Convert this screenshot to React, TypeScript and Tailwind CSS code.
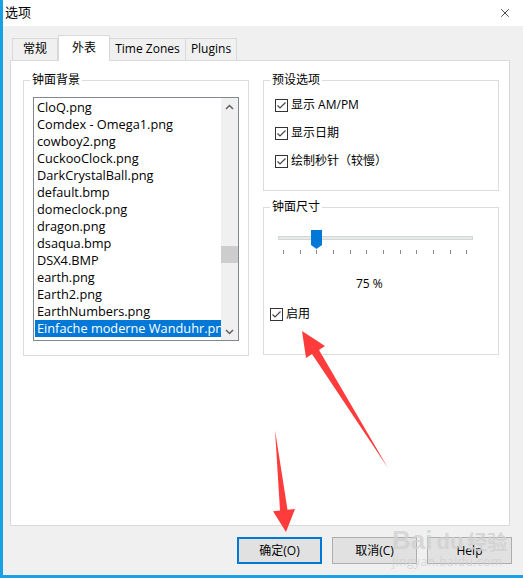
import { X } from 'lucide-react'

const files = [
  'CloQ.png',
  'Comdex - Omega1.png',
  'cowboy2.png',
  'CuckooClock.png',
  'DarkCrystalBall.png',
  'default.bmp',
  'domeclock.png',
  'dragon.png',
  'dsaqua.bmp',
  'DSX4.BMP',
  'earth.png',
  'Earth2.png',
  'EarthNumbers.png',
  'Einfache moderne Wanduhr.png',
]

const selected = 'Einfache moderne Wanduhr.png'

function Check() {
  return (
    <span className="w-[13px] h-[13px] border border-[#333333] bg-white flex items-center justify-center shrink-0">
      <svg width="11" height="11" viewBox="0 0 11 11">
        <path d="M1.5 5.5 L4 8 L9.5 2.5" fill="none" stroke="#444444" strokeWidth="1.2" />
      </svg>
    </span>
  )
}

function Group({ label, className, children }: { label: string; className: string; children: React.ReactNode }) {
  return (
    <div className={`relative border border-[#dcdcdc] ${className}`}>
      <span className="absolute -top-[9px] left-[6px] px-[2px] bg-white leading-[16px]">{label}</span>
      {children}
    </div>
  )
}

function Chevron({ up }: { up?: boolean }) {
  return (
    <svg width="9" height="6" viewBox="0 0 9 6">
      <path d={up ? 'M1 5 L4.5 1.5 L8 5' : 'M1 1 L4.5 4.5 L8 1'} fill="none" stroke="#606060" strokeWidth="1.5" />
    </svg>
  )
}

function Slider() {
  const ticks = Array.from({ length: 12 }, (_, i) => Math.round(5 + i * 16.67) + 0.5)
  return (
    <svg width="195" height="24" viewBox="0 0 195 24">
      <rect x="0.5" y="6.5" width="194" height="3" fill="#e7eaea" stroke="#d6d6d6" />
      {ticks.map((x) => (
        <line key={x} x1={x} y1="20" x2={x} y2="24" stroke="#8a8a8a" />
      ))}
      <polygon points="33,0 44,0 44,15 38.5,19 33,15" fill="#0078d7" />
    </svg>
  )
}

export default function App() {
  return (
    <div className="relative w-[523px] h-[578px] overflow-hidden font-['Open_Sans','Noto_Sans_CJK_SC',sans-serif] text-[12px] text-black">
      <div className="w-full h-full bg-[#f0f0f0] border-l-[3px] border-b-[3px] border-[#1aa0e4] flex flex-col">
        <div className="h-[26px] bg-white flex items-center justify-between pl-[2px] pr-[11px] shrink-0">
          <span className="text-[13px]">选项</span>
          <X className="w-[14px] h-[14px]" strokeWidth={1.2} />
        </div>

        <div className="flex items-end h-[26px] mt-[9px] ml-[9px]">
          <div className="w-[46px] h-[23px] border border-b-0 border-[#d9d9d9] flex items-center justify-center pb-[2px]">常规</div>
          <div className="relative z-10 w-[52px] h-[26px] bg-white border border-b-0 border-[#d9d9d9] flex items-center justify-center pb-[2px]">外表</div>
          <div className="w-[76px] h-[23px] border border-b-0 border-l-0 border-[#d9d9d9] flex items-center justify-center pb-[2px]">Time Zones</div>
          <div className="w-[51px] h-[23px] border border-b-0 border-l-0 border-[#d9d9d9] flex items-center justify-center pb-[2px]">Plugins</div>
        </div>

        <div className="-mt-px ml-[7px] w-[500px] h-[466px] bg-white border border-[#d9d9d9] flex gap-[14px] pt-[19px] pl-[12px]">
          <Group label="钟面背景" className="w-[226px] h-[276px] pt-[16px] pl-[9px]">
            <div className="w-[206px] h-[244px] border border-[#828790] flex">
              <div className="flex-1 pt-[1px] pl-[1px] overflow-hidden text-[12.75px]">
                {files.map((f) => (
                  <div
                    key={f}
                    className={`h-[17px] leading-[17px] pl-[2px] whitespace-nowrap overflow-hidden ${f === selected ? 'bg-[#0078d7] text-white' : ''}`}
                  >
                    {f}
                  </div>
                ))}
              </div>
              <div className="w-[17px] bg-[#f0f0f0] flex flex-col">
                <div className="h-[17px] flex items-center justify-center"><Chevron up /></div>
                <div className="flex-1 pt-[131px]">
                  <div className="h-[17px] bg-[#cdcdcd]" />
                </div>
                <div className="h-[17px] flex items-center justify-center"><Chevron /></div>
              </div>
            </div>
          </Group>

          <div className="flex flex-col gap-[16px]">
            <Group label="预设选项" className="w-[236px] h-[111px] pt-[15px] pl-[11px] flex flex-col gap-[10px]">
              {['显示 AM/PM', '显示日期', '绘制秒针（较慢）'].map((t) => (
                <div key={t} className="h-[18px] flex items-center gap-[3px]">
                  <Check />
                  <span>{t}</span>
                </div>
              ))}
            </Group>

            <Group label="钟面尺寸" className="w-[236px] h-[148px] pt-[22px]">
              <div className="pl-[14px] flex">
                <Slider />
              </div>
              <div className="pl-[92px] mt-[22px] leading-[16px]">75 %</div>
              <div className="h-[18px] mt-[13px] pl-[6px] flex items-center gap-[3px]">
                <Check />
                <span>启用</span>
              </div>
            </Group>
          </div>
        </div>

        <div className="flex justify-end gap-[10px] pr-[11px] mt-[11px]">
          <button className="w-[85px] h-[27px] bg-[#e1e1e1] border-2 border-[#0078d7]">确定(O)</button>
          <button className="w-[85px] h-[27px] bg-[#e1e1e1] border border-[#adadad]">取消(C)</button>
          <button className="w-[85px] h-[27px] bg-[#e1e1e1] border border-[#adadad]">Help</button>
        </div>
      </div>

      <div className="absolute left-[392px] top-[527px] text-[#d0d0d0]/80 pointer-events-none leading-none">
        <div className="flex items-end gap-[4px]">
          <span className="text-[26px] font-bold font-['Liberation_Sans',sans-serif]">Bai</span>
          <span className="text-[22px] font-bold font-['Liberation_Sans',sans-serif]">du</span>
          <span className="text-[20px] font-bold">经验</span>
        </div>
        <div className="text-[12px] mt-[3px] tracking-[0.5px]">jingyan.baidu.com</div>
      </div>

      <svg className="absolute left-0 top-0 pointer-events-none" width="523" height="578" viewBox="0 0 523 578">
        <polygon points="302,331 306,358 312,354 388,468 319,350 325,346" fill="#fe3c3c" />
        <polygon points="286,532 295,509 287.5,509.7 275,430 280,510.5 273,511.3" fill="#fe3c3c" />
      </svg>
    </div>
  )
}
